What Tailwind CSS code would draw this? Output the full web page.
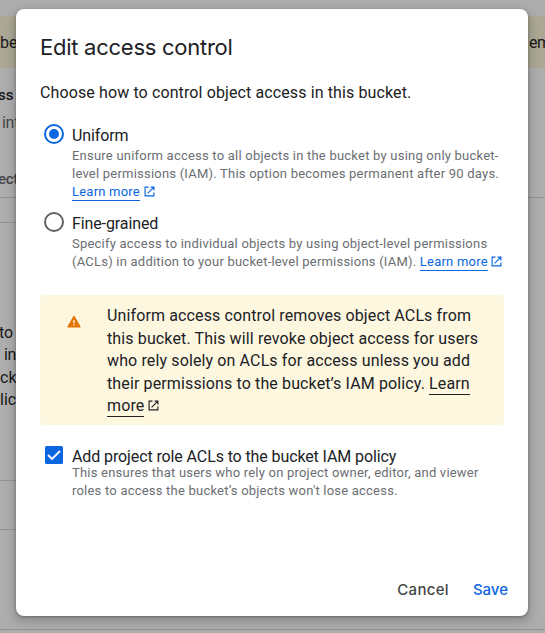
<!DOCTYPE html>
<html lang="en">
<head>
<meta charset="utf-8">
<title>Edit access control</title>
<script src="https://cdn.jsdelivr.net/npm/@tailwindcss/browser@4"></script>
</head>
<body class="relative h-[633px] w-[545px] overflow-hidden bg-[#adadad] font-[Roboto,sans-serif] text-[#202124]">
<svg class="hidden">
  <symbol id="external" viewBox="0 0 11 11"><path d="M4.500 1.100H1.100v8.800h8.800V6.500M6.500 1.100h3.400v3.400M9.900 1.100 3.600 7.400" fill="none" stroke="currentColor" stroke-width="1.150"/></symbol>
</svg>

<main class="flex h-full flex-col pt-4 text-base" aria-hidden="true">
  <div class="flex h-[52px] items-center justify-between bg-[#aba794] pt-[2px] text-[#17181a]"><span>be</span><span class="w-4 tracking-[-0.5px]">em</span></div>
  <div class="h-[130px] border-b border-[#929292]">
    <div class="-ml-[2px] pt-[17px] text-[15px] leading-5 font-medium text-[#17181a]">ss</div>
    <div class="pt-[6px] pl-[2px] leading-6 tracking-[-0.3px] text-[#45474a]">int</div>
    <div class="-ml-[2px] pt-[32px] text-[15px] leading-6 font-medium tracking-[-0.3px] text-[#45474a]">ect</div>
  </div>
  <div class="h-[25px] w-4 border-b border-[#929292]"></div>
  <div class="h-[258px] w-4 border-b border-[#929292] pt-[99px] leading-[22.400px] text-[#17181a]">
    <div class="-ml-px">to</div><div class="pl-[4px] tracking-[-0.3px]">in</div><div>ck</div><div>lic</div>
  </div>
  <div class="h-[49px] w-4 border-b border-[#929292]"></div>
  <div class="h-[100px] border-b border-[#929292]"></div>
</main>

<section role="dialog" class="absolute top-[9px] left-4 flex h-[607px] w-[512px] flex-col rounded-lg bg-white px-6 pt-[24px] shadow-[0_1px_3px_rgba(0,0,0,0.3),0_4px_8px_3px_rgba(0,0,0,0.15)]">
  <h1 class="h-7 font-[Inter,sans-serif] text-[22px] leading-7 tracking-[-0.260px] whitespace-nowrap">Edit access control</h1>
  <p class="mt-5 text-base leading-6 tracking-[0.115px] whitespace-nowrap">Choose how to control object access in this bucket.</p>

  <div class="mt-[19px] flex">
    <div class="ml-1 mr-2 flex size-5 shrink-0 items-center justify-center rounded-full border-2 border-[#0b66df]"><div class="size-[10px] rounded-full bg-[#0b66df]"></div></div>
    <div>
      <div class="h-[23px] text-base leading-6 tracking-[-0.110px]">Uniform</div>
      <div class="text-[13px] leading-[18px] tracking-[0.220px] whitespace-nowrap text-[#6b6e72]">Ensure uniform access to all objects in the bucket by using only bucket-<br>level permissions (IAM). This option becomes permanent after 90 days.<br><a class="inline-block h-[18px] border-b border-[#0b66df] text-[#0b66df]">Learn more</a><svg class="ml-1 inline size-[11px] align-[-1px] text-[#0b66df]"><use href="#external"/></svg></div>
    </div>
  </div>

  <div class="mt-[11px] flex">
    <div class="ml-1 mr-2 size-5 shrink-0 rounded-full border-2 border-[#5f6368]"></div>
    <div>
      <div class="h-[23px] text-base leading-6 tracking-[-0.110px]">Fine-grained</div>
      <div class="text-[13px] leading-[18px] tracking-[0.220px] whitespace-nowrap text-[#6b6e72]">Specify access to individual objects by using object-level permissions<br>(ACLs) in addition to your bucket-level permissions (IAM). <a class="inline-block h-[18px] border-b border-[#0b66df] text-[#0b66df]">Learn more</a><svg class="ml-[3px] inline size-[11px] align-[-1px] text-[#0b66df]"><use href="#external"/></svg></div>
    </div>
  </div>

  <div class="mt-[24px] flex h-[130px] w-[464px] rounded bg-[#fef7e0] pt-[9px]">
    <svg class="mt-[11px] ml-[27px] h-[13px] w-[14px] shrink-0" viewBox="0 0 14 13"><path d="M7 1 13.300 12H.7Z" fill="#e37400" stroke="#e37400" stroke-linejoin="round"/><path d="M6.300 5h1.400v3.300H6.300Zm0 4.200h1.400v1.300H6.300Z" fill="#fef7e0"/></svg>
    <div class="mt-px ml-[26px] text-base leading-[22.500px] tracking-[0.125px] whitespace-nowrap">Uniform access control removes object ACLs from<br>this bucket. This will revoke object access for users<br>who rely solely on ACLs for access unless you add<br>their permissions to the bucket’s IAM policy. <a class="inline-block h-[22px] border-b border-[#202124]">Learn</a><br><a class="inline-block h-[22px] border-b border-[#202124]">more</a><svg class="ml-1 inline size-[11px] align-[0px]"><use href="#external"/></svg></div>
  </div>

  <div class="mt-[21px] flex">
    <svg class="mr-[9px] ml-[5px] size-[18px] shrink-0" viewBox="0 0 18 18"><rect width="18" height="18" rx="1.500" fill="#0b66df"/><path d="m3 9 4 4 8-8" fill="none" stroke="white" stroke-width="1.800"/></svg>
    <div>
      <div class="h-[18px] text-base leading-[22px] tracking-[-0.110px] whitespace-nowrap">Add project role ACLs to the bucket IAM policy</div>
      <div class="text-[13px] leading-[18px] tracking-[0.215px] whitespace-nowrap text-[#6b6e72]">This ensures that users who rely on project owner, editor, and viewer<br>roles to access the bucket’s objects won't lose access.</div>
    </div>
  </div>

  <div class="mt-auto flex justify-end gap-6 pb-[14px] font-[Inter,sans-serif] text-[15px] leading-6 font-medium"><button class="tracking-[0.300px] text-[#444746]">Cancel</button><button class="-mr-[4px] text-[#0b66df]">Save</button></div>
</section>
</body>
</html>
